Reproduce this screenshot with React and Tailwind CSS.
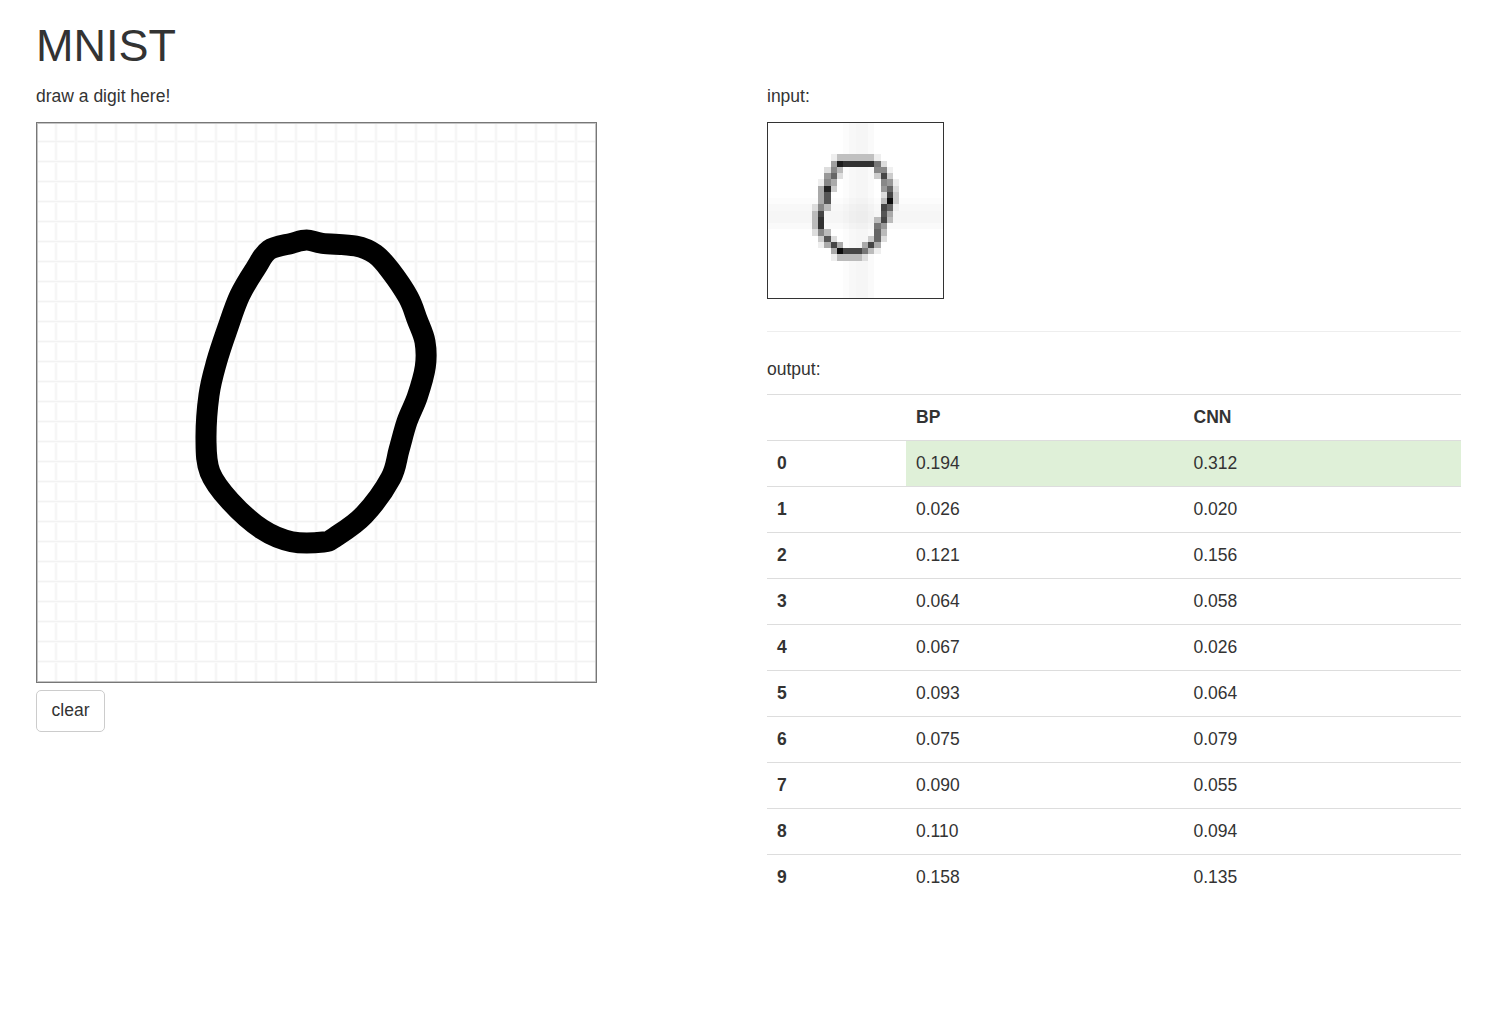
import React from 'react'

const digits = [
  [0, '0.194', '0.312'],
  [1, '0.026', '0.020'],
  [2, '0.121', '0.156'],
  [3, '0.064', '0.058'],
  [4, '0.067', '0.026'],
  [5, '0.093', '0.064'],
  [6, '0.075', '0.079'],
  [7, '0.090', '0.055'],
  [8, '0.110', '0.094'],
  [9, '0.158', '0.135'],
]

// center line of the hand drawn zero, traced at 3x then scaled to the canvas
const stroke = [
  [350, 60], [397, 70], [497, 78], [555, 102], [600, 150], [655, 232], [682, 300], [705, 365],
  [706, 440], [682, 530], [651, 605], [627, 690], [602, 775], [522, 885], [437, 950], [400, 966],
  [305, 965], [215, 927], [120, 843], [60, 757], [48, 660], [57, 525], [80, 425], [112, 327],
  [149, 227], [197, 145], [237, 90], [305, 70],
].map(([x, y]) => [x / 3 + 153, y / 3 + 97])

// closed catmull-rom curve through the points
const smoothPath = (pts) => {
  const n = pts.length
  let d = `M${pts[0][0]} ${pts[0][1]}`
  for (let i = 0; i < n; i++) {
    const p0 = pts[(i - 1 + n) % n]
    const p1 = pts[i]
    const p2 = pts[(i + 1) % n]
    const p3 = pts[(i + 2) % n]
    const c1x = p1[0] + (p2[0] - p0[0]) / 6
    const c1y = p1[1] + (p2[1] - p0[1]) / 6
    const c2x = p2[0] - (p3[0] - p1[0]) / 6
    const c2y = p2[1] - (p3[1] - p1[1]) / 6
    d += `C${c1x} ${c1y} ${c2x} ${c2y} ${p2[0]} ${p2[1]}`
  }
  return d + 'Z'
}

const gridLines = Array.from({ length: 27 }, (_, i) => i * 20)

// 28x28 pixels of the scaled input: row -> [col, gray] pairs
const pixels = {
  5: [[10, 0xee], [11, 0xc0], [12, 0xc0], [13, 0xc0], [14, 0xc0], [15, 0xc0], [16, 0xc0], [17, 0xee]],
  6: [[10, 0xa0], [11, 0x1a], [12, 0x33], [13, 0x33], [14, 0x33], [15, 0x33], [16, 0x33], [17, 0x77], [18, 0xdd]],
  7: [[9, 0xdd], [10, 0x88], [11, 0xbb], [17, 0x88], [18, 0x88], [19, 0xf0]],
  8: [[9, 0x99], [10, 0x66], [11, 0xdd], [17, 0xcc], [18, 0x44], [19, 0xcc]],
  9: [[8, 0xee], [9, 0x88], [10, 0xaa], [18, 0x88], [19, 0x99], [20, 0xee]],
  10: [[8, 0xaa], [9, 0x22], [10, 0xcc], [18, 0x99], [19, 0x66], [20, 0xdd]],
  11: [[8, 0xaa], [9, 0x55], [18, 0xdd], [19, 0x44], [20, 0xcc]],
  12: [[8, 0xaa], [9, 0x55], [18, 0xbb], [19, 0x11], [20, 0xcc]],
  13: [[7, 0xdd], [8, 0x88], [9, 0xbb], [18, 0x44], [19, 0x66], [20, 0xee]],
  14: [[7, 0xbb], [8, 0x44], [18, 0x55], [19, 0xaa]],
  15: [[7, 0xbb], [8, 0x33], [17, 0xbb], [18, 0x44], [19, 0xbb]],
  16: [[7, 0xbb], [8, 0x33], [17, 0x77], [18, 0x99]],
  17: [[7, 0xdd], [8, 0x88], [9, 0xbb], [17, 0x66], [18, 0xbb]],
  18: [[8, 0xcc], [9, 0x55], [10, 0xdd], [16, 0xcc], [17, 0x66], [18, 0xdd]],
  19: [[8, 0xee], [9, 0xaa], [10, 0x44], [11, 0xaa], [15, 0xaa], [16, 0x44], [17, 0xaa]],
  20: [[10, 0xaa], [11, 0x11], [12, 0x44], [13, 0x44], [14, 0x44], [15, 0x77], [16, 0xbb], [17, 0xee]],
  21: [[10, 0xee], [11, 0xbb], [12, 0xbb], [13, 0xbb], [14, 0xbb], [15, 0xdd]],
}

// faint cross behind the digit
const bandShade = { 12: 3, 13: 7, 14: 9, 15: 9, 16: 5 }

const gray = (v) => `rgb(${v},${v},${v})`

const DrawCanvas = () => (
  <svg viewBox="1 1 557 557" className="block w-[559px] h-[559px] border border-[#c4c4c4]">
    {gridLines.map((p) => (
      <g key={p}>
        <line x1={p + 19} y1="0" x2={p + 19} y2="560" stroke="#fafafa" strokeWidth="3" />
        <line x1="0" y1={p + 18.5} x2="560" y2={p + 18.5} stroke="#fafafa" strokeWidth="3" />
        <line x1={p + 19} y1="0" x2={p + 19} y2="560" stroke="#f2f2f2" strokeWidth="1" />
        <line x1="0" y1={p + 18.5} x2="560" y2={p + 18.5} stroke="#f2f2f2" strokeWidth="1" />
      </g>
    ))}
    <path d={smoothPath(stroke)} fill="none" stroke="#000" strokeWidth="21" strokeLinejoin="round" />
  </svg>
)

const InputPreview = () => {
  const cells = []
  for (let r = 0; r < 28; r++) {
    for (let c = 0; c < 28; c++) {
      const shade = (bandShade[r] || 0) + (bandShade[c] || 0)
      if (shade > 0) cells.push([c, r, 255 - shade])
    }
  }
  Object.entries(pixels).forEach(([r, row]) => {
    row.forEach(([c, v]) => cells.push([c, Number(r), v]))
  })
  return (
    <svg viewBox="0 0 28 28" className="block w-[175px] h-[175px]">
      <defs>
        <filter id="soft" x="0" y="0" width="100%" height="100%">
          <feGaussianBlur stdDeviation="0.12" />
        </filter>
      </defs>
      <g filter="url(#soft)" shapeRendering="crispEdges">
        <rect x="0" y="0" width="28" height="28" fill="#fff" />
        {cells.map(([c, r, v], i) => (
          <rect key={i} x={c} y={r} width="1.02" height="1.02" fill={gray(v)} />
        ))}
      </g>
    </svg>
  )
}

const App = () => {
  return (
    <div className="min-h-[1017px] bg-white pl-[36px] pr-[45px] text-[17.5px] leading-[25px] text-[#333] font-['Liberation_Sans',Arial,sans-serif]">
      <h1 className="pt-[21px] text-[45px] leading-[50px] font-normal">MNIST</h1>
      <div className="flex mt-[13px]">
        <div className="w-[731px] shrink-0">
          <p>draw a digit here!</p>
          <div className="mt-[13px] w-[561px] border border-[#777]">
            <DrawCanvas />
          </div>
          <button className="mt-[7px] block h-[42px] w-[69px] rounded-[5px] border border-[#ccc] bg-white pb-[2px] text-center">
            clear
          </button>
        </div>

        <div className="flex-1 min-w-0">
          <p>input:</p>
          <div className="mt-[13px] w-[177px] border border-[#333]">
            <InputPreview />
          </div>
          <hr className="mt-[32px] border-0 border-t border-[#eee]" />
          <p className="mt-[25px]">output:</p>
          <table className="mt-[12px] w-full table-fixed border-collapse">
            <thead>
              <tr className="border-t border-b border-[#ddd]">
                <th className="w-[139px] h-[46px] px-[10px]"></th>
                <th className="h-[46px] px-[10px] text-left font-bold">BP</th>
                <th className="h-[46px] px-[10px] text-left font-bold">CNN</th>
              </tr>
            </thead>
            <tbody>
              {digits.map(([d, bp, cnn]) => (
                <tr key={d} className="border-b border-[#ddd] last:border-b-0">
                  <th className="h-[46px] px-[10px] text-left font-bold">{d}</th>
                  <td className={d === 0 ? 'h-[46px] px-[10px] bg-[#dff0d8]' : 'h-[46px] px-[10px]'}>{bp}</td>
                  <td className={d === 0 ? 'h-[46px] px-[10px] bg-[#dff0d8]' : 'h-[46px] px-[10px]'}>{cnn}</td>
                </tr>
              ))}
            </tbody>
          </table>
        </div>
      </div>
    </div>
  )
}

export default App
